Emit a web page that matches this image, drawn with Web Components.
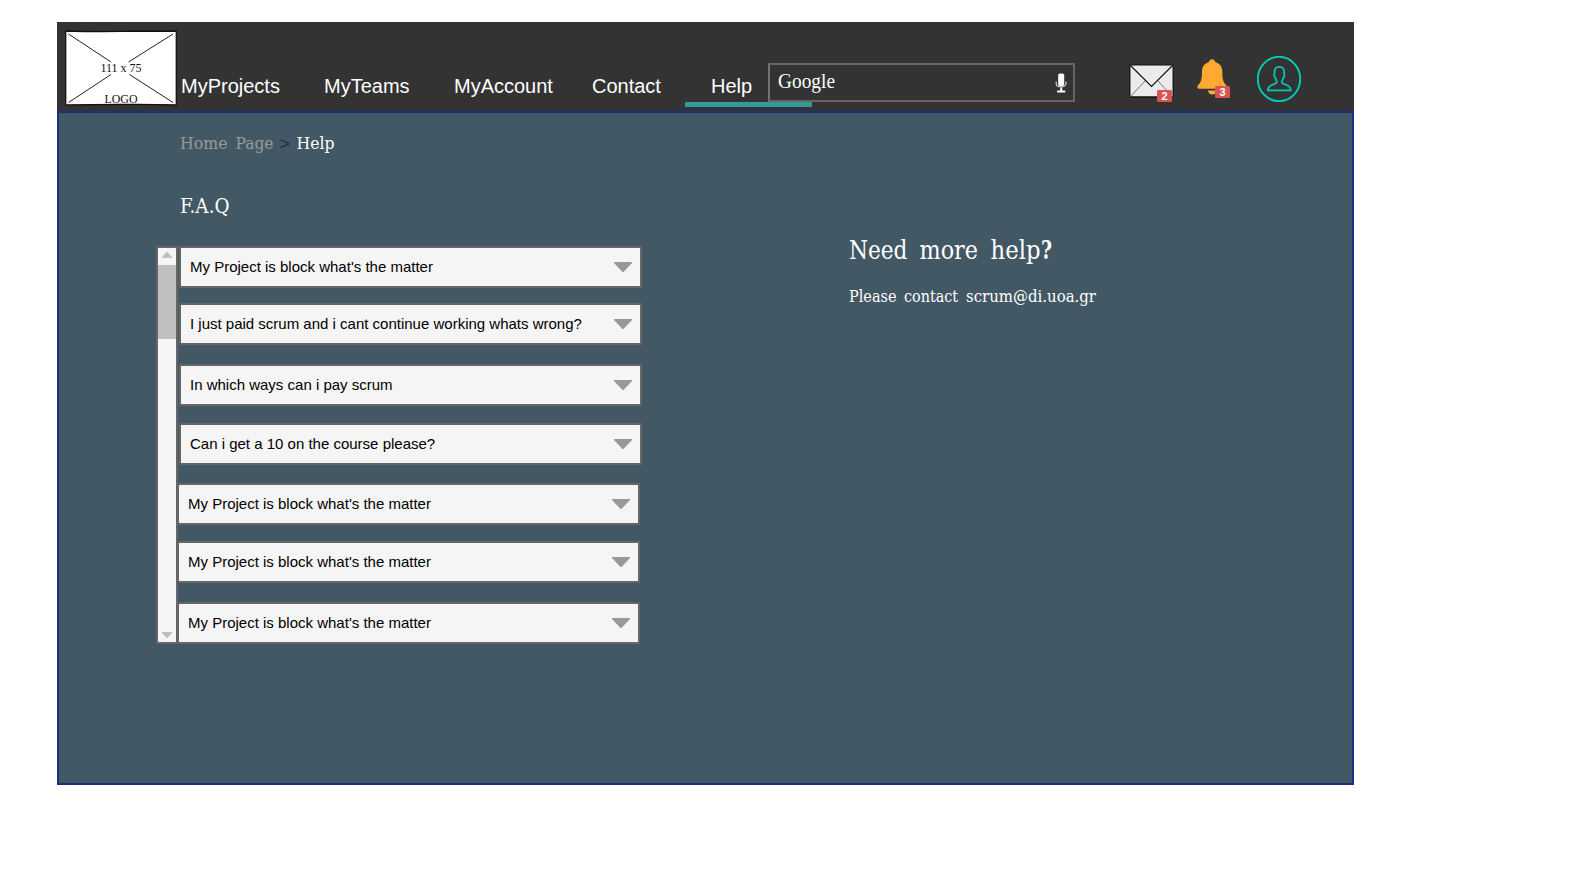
<!DOCTYPE html>
<html lang="en">
<head>
<meta charset="utf-8">
<title>Help</title>
<style>
html,body{margin:0;background:#fff}
body{padding:22px 0 0 57px;font-family:"Liberation Sans",Arial,sans-serif}
</style>
</head>
<body>
<help-page></help-page>
<script>
function define(name, html) {
  customElements.define(name, class extends HTMLElement {
    connectedCallback() {
      if (this.shadowRoot) return;
      const t = document.createElement('template');
      t.innerHTML = typeof html === 'function' ? html(this) : html;
      this.attachShadow({mode: 'open'}).append(t.content.cloneNode(true));
    }
  });
}

define('site-logo', `
<style>:host{display:block;width:112px;height:76px}svg{display:block}text{font-family:"Liberation Serif",serif;font-size:12px;fill:#111}</style>
<svg width="112" height="76">
<path d="M.7 1Q28 1.8 56 1.4T111.3 1V75Q84 74 56 74.4T.7 75Z" fill="#fff" stroke="#111" stroke-width="1.3"/>
<path d="M3.5 4L46 32M63.500 32L108 4M3.500 72.500L46 44.500M64.500 44.500L108 72.500" stroke="#222" fill="none"/>
<text x="35.500" y="41.500" textLength="41" lengthAdjust="spacingAndGlyphs">111 x 75</text>
<text x="39.500" y="72.500" textLength="33" lengthAdjust="spacingAndGlyphs">LOGO</text>
</svg>`);

define('nav-link', `
<style>:host{display:block;height:27px;line-height:23px;font-size:20px;color:#fff;white-space:nowrap;box-sizing:border-box}
:host([active]){width:127px;padding-left:26px;border-bottom:5px solid #339999}</style>
<slot></slot>`);

define('search-field', `
<style>:host{display:flex;align-items:center;justify-content:space-between;box-sizing:border-box;width:307px;height:39px;border:2px solid #646464;border-left-color:#737373;background:#333;padding:0 6px 0 8px;position:relative}
svg{display:block;overflow:visible}text{font-family:"Liberation Serif",serif;font-size:22px;fill:#fff}</style>
<svg width="64" height="30"><text x="0" y="20" textLength="57" lengthAdjust="spacingAndGlyphs">Google</text></svg>
<svg width="12" height="20" viewBox="0 0 12 20"><rect x="3.200" y="0.500" width="6" height="12.500" rx="1.800" fill="#fff"/><path d="M1.200 8.500V10.500C1.200 15 11 15 11 10.500V8.500" fill="none" stroke="#ccc" stroke-width="1.200"/><path d="M6.200 14.500V18M2.200 18.500H10.200" stroke="#fff" stroke-width="2"/></svg>`);

define('count-badge', `
<style>:host{display:block;width:15px;height:12px;border-radius:1.500px;background:#d9534f;color:#fff;font:bold 11px/12.500px "Liberation Sans",sans-serif;text-align:center}</style><slot></slot>`);

define('mail-icon', `
<style>:host{display:block;position:relative;width:45px;height:34px}svg{display:block}count-badge{position:absolute;left:28px;top:26px}</style>
<svg width="45" height="34"><rect x=".8" y=".8" width="43.400" height="32.200" rx=".8" fill="#ebebeb" stroke="#111" stroke-width="1.300"/>
<path d="M1.500 32.500L16.500 16.500M43.500 32.500L28.500 16.500" stroke="#777"/><path d="M1.500 1.500L22.500 22.500L43.500 1.500" fill="none" stroke="#111" stroke-width="1.200"/></svg>
<count-badge><slot></slot></count-badge>`);

define('bell-icon', `
<style>:host{display:block;position:relative;width:32px;height:37px}svg{display:block}count-badge{position:absolute;left:18px;top:27px}</style>
<svg width="32" height="37"><path d="M15 .3C16.800 .3 18 1.300 18.200 3.100C23 4.500 25.300 8.200 25.300 12.500C25.300 20 26 23 29.500 26.500Q31 29.500 28.500 29.700H2Q-.6 29.500 .8 26.500C4.300 23 5 20 5 12.500C5 8.200 7.300 4.500 12 3.100C12.200 1.300 13.300 .3 15 .3Z" fill="#ffa931"/><path d="M11 31.500H19.500C19 34 17.400 35.500 15.200 35.500C13 35.500 11.400 34 11 31.500Z" fill="#ffa931"/></svg>
<count-badge><slot></slot></count-badge>`);

define('user-icon', `
<style>:host{display:block;width:44px;height:46px}svg{display:block}</style>
<svg width="44" height="46" fill="none" stroke="#0cb"><ellipse cx="22" cy="23" rx="21.200" ry="22.200" stroke-width="1.900"/>
<path d="M22.300 10.800C18.600 10.800 17.200 13.300 17.600 17.500C16.500 18 17.300 21 18.300 21.700C18.600 24 20.200 24.800 19.700 26.500C19 29 11 27.500 10.700 34.300H33.800C33.500 27.500 25.600 29 24.900 26.500C24.400 24.800 26 24 26.300 21.700C27.300 21 28.100 18 27 17.500C27.400 13.300 26 10.800 22.300 10.800Z" stroke-width="1.700" stroke-linejoin="round"/></svg>`);

define('site-header', `
<style>:host{display:flex;align-items:flex-start;height:89px;background:#333}
site-logo{margin:8px 0 0 8px}nav{display:flex;margin:53px 0 0 4px}
nav-link:nth-child(1){width:143px}nav-link:nth-child(2){width:130px}nav-link:nth-child(3){width:138px}nav-link:nth-child(4){width:93px}
nav-link:nth-child(5){height:32px}
search-field{margin:41px 0 0 -44px}mail-icon{margin:42px 0 0 54px}bell-icon{margin:37px 0 0 23px}user-icon{margin:34px 0 0 28px}</style>
<site-logo></site-logo>
<nav><nav-link>MyProjects</nav-link><nav-link>MyTeams</nav-link><nav-link>MyAccount</nav-link><nav-link>Contact</nav-link><nav-link active>Help</nav-link></nav>
<search-field></search-field><mail-icon>2</mail-icon><bell-icon>3</bell-icon><user-icon></user-icon>`);

/* A line of serif text; each item of "words" is word|x|width|colour|weight. */
define('serif-line', el => {
  const size = +el.getAttribute('size');
  const spans = el.getAttribute('words').split(' ').map(w => {
    const [t, x, len, fill = '#fff', weight = 'normal'] = w.split('|');
    return `<tspan x="${x}" textLength="${len}" lengthAdjust="spacingAndGlyphs" fill="${fill}" font-weight="${weight}">${t.replace('>', '&gt;')}</tspan>`;
  }).join(' ');
  return `<style>:host{display:block}svg{display:block;overflow:visible}text{font-family:"DejaVu Serif Condensed","DejaVu Serif",serif;font-size:${size}px}</style><svg width="260" height="30"><text y="22">${spans}</text></svg>`;
});

define('faq-scrollbar', `
<style>:host{display:flex;flex-direction:column;box-sizing:border-box;width:22px;height:398px;border:2px solid #666;background:#f5f5f5}
.track{flex:1}.thumb{height:74px;background:#c0c0c0}svg{display:block}</style>
<svg width="18" height="17"><path d="M4 10V9L8.500 4H9.500L14 9V10Z" fill="#c0c0c0"/></svg><div class="thumb"></div><div class="track"></div>
<svg width="18" height="10"><path d="M4 0H14V1L9.500 6H8.500L4 1Z" fill="#c0c0c0"/></svg>`);

define('faq-item', `
<style>:host{display:flex;align-items:center;justify-content:space-between;box-sizing:border-box;width:463px;height:42px;border:2px solid #666;background:#f5f5f5;padding:0 8px 0 9px;font-size:15px;line-height:18px;color:#000}
svg{display:block}</style><span><slot></slot></span><svg width="18" height="10"><path d="M0 0H18V1L9.500 10H8.500L0 1Z" fill="#999"/></svg>`);

define('faq-list', `
<style>:host{display:flex}.rows{display:grid;grid-template-rows:57px 61px 59px 60px 58px 61px 42px;margin-left:-1px}
::slotted(faq-item:nth-child(-n+4)){margin-left:2px}</style>
<faq-scrollbar></faq-scrollbar><div class="rows"><slot></slot></div>`);

define('help-page', `
<style>:host{display:block;width:1297px}
main{box-sizing:border-box;height:674px;border:2px solid #1b2f83;background:#435865;display:grid;grid-template-columns:693px 1fr;padding:14px 0 0 97px}
.crumb{margin-left:24px}.title{margin:34px 0 0 24px}faq-list{margin-top:25px}
.more{padding-top:110px}.contact{margin-top:13px}</style>
<site-header></site-header>
<main>
<section>
<serif-line class="crumb" size="17.2" words="Home|0|47.500|#999 Page|55.500|38|#999 >|99|12|#25313a Help|116.500|38"></serif-line>
<serif-line class="title" size="20" words="F.A.Q|0|49.500"></serif-line>
<faq-list>
<faq-item>My Project is block what's the matter</faq-item>
<faq-item>I just paid scrum and i cant continue working whats wrong?</faq-item>
<faq-item>In which ways can i pay scrum</faq-item>
<faq-item>Can i get a 10 on the course please?</faq-item>
<faq-item>My Project is block what's the matter</faq-item>
<faq-item>My Project is block what's the matter</faq-item>
<faq-item>My Project is block what's the matter</faq-item>
</faq-list>
</section>
<section class="more">
<serif-line size="25.5" words="Need|0|58.500 more|70.500|58.500 help|141.500|50 ?|192|11|#fff|bold"></serif-line>
<serif-line class="contact" size="17.2" words="Please|0|47.500 contact|55|54 scrum@di.uoa.gr|117|130"></serif-line>
</section>
</main>`);
</script>
</body>
</html>
